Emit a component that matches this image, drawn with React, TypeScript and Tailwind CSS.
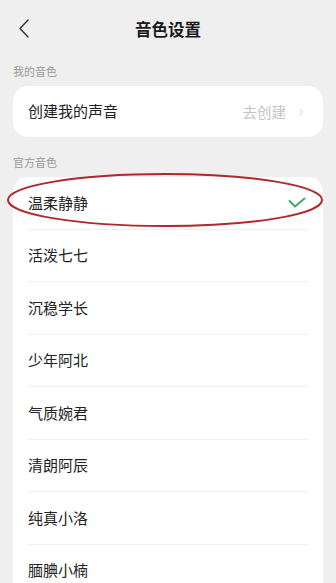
import { ChevronRight } from 'lucide-react';

const voices = ['温柔静静', '活泼七七', '沉稳学长', '少年阿北', '气质婉君', '清朗阿辰', '纯真小洛', '腼腆小楠'];

const font = { fontFamily: '"Noto Sans CJK SC", "Noto Sans", sans-serif' };

const App = () => {
  return (
    <div className="h-[583px] w-[336px] overflow-hidden bg-[#efefef] text-[#222]" style={font}>
      {/* header */}
      <div className="relative flex h-[58px] items-center justify-center">
        <svg className="absolute left-[16px] top-[17px]" width="16" height="24" viewBox="0 0 16 24">
          <path d="M12 3 L4 11.5 L12 20" fill="none" stroke="#333" strokeWidth="1.4" strokeLinecap="round" strokeLinejoin="round" />
        </svg>
        <h1 className="text-[16.5px] font-bold text-[#1a1a1a]">音色设置</h1>
      </div>

      <div className="px-[13px]">
        <p className="mt-[4px] text-[11px] leading-[18px] text-[#999]">我的音色</p>
        <div className="mt-[6px] flex h-[51px] items-center justify-between rounded-[15px] bg-white pl-[15px] pr-[16px]">
          <span className="text-[15px]">创建我的声音</span>
          <div className="flex items-center gap-[9px] text-[#c4c4c4]">
            <span className="text-[14.5px]">去创建</span>
            <ChevronRight className="h-[12px] w-[12px]" strokeWidth={1.6} />
          </div>
        </div>

        <p className="mt-[16px] text-[11px] leading-[18px] text-[#999]">官方音色</p>
        <div className="relative mt-[6px] rounded-t-[15px] bg-white px-[15px]">
          {voices.map((name, i) => (
            <div
              key={name}
              className="flex h-[52.5px] items-center justify-between border-b border-[#f0f0f0]"
            >
              <span className="text-[15px]">{name}</span>
              {i === 0 && (
                <svg className="mr-[2px]" width="18" height="12" viewBox="0 0 18 12">
                  <path d="M1.5 4 L7 9.5 L16.5 1.5" fill="none" stroke="#3aa56e" strokeWidth="1.8" strokeLinecap="round" strokeLinejoin="round" />
                </svg>
              )}
            </div>
          ))}

          {/* red annotation ellipse */}
          <svg className="pointer-events-none absolute left-[-7px] top-[-5px]" width="320" height="58" viewBox="0 0 320 58">
            <ellipse cx="159" cy="28" rx="157" ry="26" fill="none" stroke="#b3262b" strokeWidth="2" />
          </svg>
        </div>
      </div>
    </div>
  );
};

export default App;
